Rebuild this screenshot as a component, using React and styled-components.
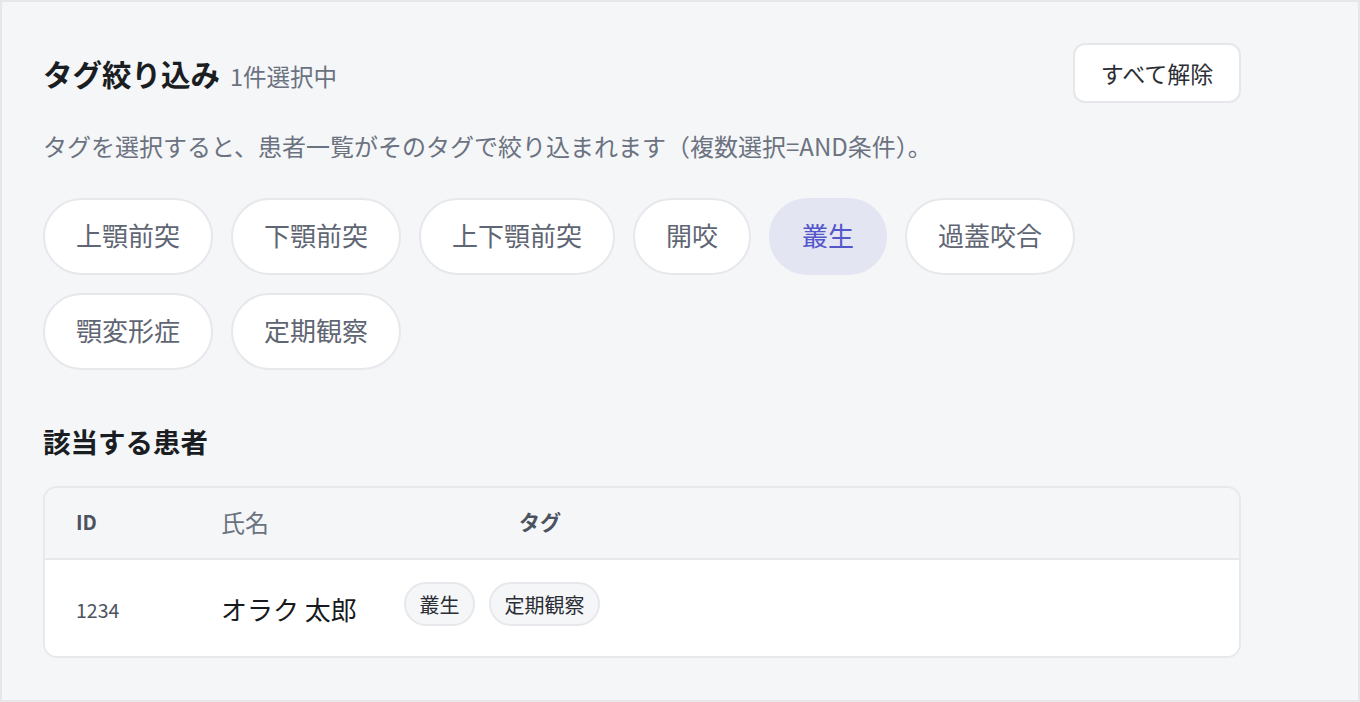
import React, { useState } from 'react';
import styled, { createGlobalStyle } from 'styled-components';

const GlobalStyle = createGlobalStyle`
  html, body { margin: 0; padding: 0; }
  body {
    font-family: "Noto Sans CJK JP", "Noto Sans", sans-serif;
    background: #f5f6f8;
  }
`;

const TAGS = ['上顎前突', '下顎前突', '上下顎前突', '開咬', '叢生', '過蓋咬合', '顎変形症', '定期観察'];

const PATIENTS = [
    { id: '1234', name: 'オラク 太郎', tags: ['叢生', '定期観察'] },
];

const Frame = styled.div`
  box-sizing: border-box;
  height: 702px;
  border: 2px solid #e5e7eb;
  background: #f5f6f8;
  padding: 41px 0 0 41px;
`;

const Content = styled.div`
  width: 1198px;
`;

const HeadRow = styled.div`
  display: flex;
  justify-content: space-between;
  align-items: center;
`;

const Title = styled.h2`
  margin: 0;
  font-size: 29.5px;
  font-weight: 700;
  color: #1a1d21;
  display: flex;
  align-items: baseline;
  gap: 10px;
`;

const Count = styled.span`
  font-size: 23.5px;
  font-weight: 400;
  color: #6b7280;
`;

const ClearButton = styled.button`
  box-sizing: border-box;
  width: 168px;
  height: 60px;
  border: 2px solid #e5e7eb;
  border-radius: 12px;
  background: #fff;
  font-family: inherit;
  font-size: 23px;
  color: #2a2d33;
  cursor: pointer;
`;

const Hint = styled.p`
  margin: 27px 0 0;
  font-size: 24px;
  line-height: 32px;
  color: #6b7280;
`;

const ChipList = styled.div`
  display: flex;
  flex-wrap: wrap;
  gap: 18px;
  margin-top: 36px;
  width: 1060px;
`;

const Chip = styled.button`
  box-sizing: border-box;
  height: 77px;
  padding: 0 31px 3px;
  border-radius: 999px;
  border: 2px solid ${p => (p.$active ? '#e3e5f3' : '#e6e8ec')};
  background: ${p => (p.$active ? '#e3e5f3' : '#fff')};
  color: ${p => (p.$active ? '#5356c8' : '#5f6673')};
  font-family: inherit;
  font-size: 26px;
  line-height: 1;
  cursor: pointer;
`;

const SectionTitle = styled.h3`
  margin: 51px 0 0;
  font-size: 27.5px;
  font-weight: 700;
  color: #1a1d21;
  line-height: 40px;
`;

const Table = styled.div`
  margin-top: 25px;
  border: 2px solid #e7e9ed;
  border-radius: 14px;
  overflow: hidden;
`;

const Row = styled.div`
  display: grid;
  grid-template-columns: 176px 183px 272px 1fr;
  align-items: center;
  height: ${p => (p.$head ? '70px' : '96px')};
  background: ${p => (p.$head ? '#f5f6f8' : '#fff')};
  border-bottom: ${p => (p.$head ? '2px solid #e7e9ed' : 'none')};
`;

const HeadCell = styled.div`
  padding-left: ${p => (p.$first ? '31px' : '0')};
  text-align: ${p => (p.$center ? 'center' : 'left')};
  font-size: ${p => p.$size || '20px'};
  font-weight: ${p => (p.$bold ? 700 : 400)};
  color: ${p => (p.$bold ? '#4b5260' : '#6b7280')};
  margin-top: -4px;
`;

const IdCell = styled.div`
  padding-left: 31px;
  font-size: 19.5px;
  color: #4b5260;
  padding-top: 2px;
`;

const NameCell = styled.div`
  font-size: 26px;
  color: #17191c;
`;

const TagCell = styled.div`
  grid-column: 3 / -1;
  display: flex;
  gap: 14px;
  margin-top: -8px;
`;

const TagPill = styled.span`
  box-sizing: border-box;
  height: 44px;
  display: inline-flex;
  align-items: center;
  padding: 0 13.5px;
  border-radius: 999px;
  border: 2px solid #e6e8ec;
  background: #f5f6f8;
  font-size: 20px;
  color: #2a2d33;
`;

export default function App() {
    const [selected, setSelected] = useState(['叢生']);

    const toggle = (tag) => {
        setSelected(s => (s.includes(tag) ? s.filter(t => t !== tag) : [...s, tag]));
    };

    const rows = PATIENTS.filter(p => selected.every(t => p.tags.includes(t)));

    return (
        <>
            <GlobalStyle />
            <Frame>
                <Content>
                    <HeadRow>
                        <Title>
                            タグ絞り込み<Count>{selected.length}件選択中</Count>
                        </Title>
                        <ClearButton onClick={() => setSelected([])}>すべて解除</ClearButton>
                    </HeadRow>
                    <Hint>タグを選択すると、患者一覧がそのタグで絞り込まれます（複数選択=AND条件）。</Hint>
                    <ChipList>
                        {TAGS.map(tag => (
                            <Chip key={tag} $active={selected.includes(tag)} onClick={() => toggle(tag)}>
                                {tag}
                            </Chip>
                        ))}
                    </ChipList>

                    <SectionTitle>該当する患者</SectionTitle>
                    <Table>
                        <Row $head>
                            <HeadCell $first $bold>ID</HeadCell>
                            <HeadCell $size="24px">氏名</HeadCell>
                            <HeadCell $bold $center $size="21px">タグ</HeadCell>
                        </Row>
                        {rows.map(p => (
                            <Row key={p.id}>
                                <IdCell>{p.id}</IdCell>
                                <NameCell>{p.name}</NameCell>
                                <TagCell>
                                    {p.tags.map(t => <TagPill key={t}>{t}</TagPill>)}
                                </TagCell>
                            </Row>
                        ))}
                    </Table>
                </Content>
            </Frame>
        </>
    );
}
